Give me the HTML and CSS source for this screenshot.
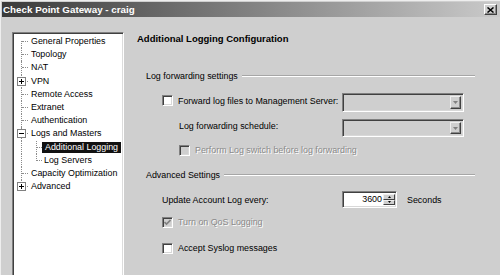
FILE: index.html
```html
<!DOCTYPE html>
<html lang="en">
<head>
  <meta charset="UTF-8">
  <title>Check Point Gateway - craig</title>
  <link rel="stylesheet" href="styles.css">
</head>
<body>
  <div class="window">
    <!-- Title bar -->
    <div class="titlebar">
      <span class="title">Check Point Gateway - craig</span>
      <span class="close">
        <svg width="7" height="6" viewBox="0 0 7 6"><path d="M0.5 0.5L6.5 5.5M6.5 0.5L0.5 5.5" stroke="#000" stroke-width="1.5"/></svg>
      </span>
    </div>

    <div class="content">
      <!-- Tree -->
      <ul class="tree">
        <li class="node first"><span class="branch"></span><span class="label">General Properties</span></li>
        <li class="node"><span class="branch"></span><span class="label">Topology</span></li>
        <li class="node"><span class="branch"></span><span class="label">NAT</span></li>
        <li class="node">
          <span class="branch">
            <svg class="expander" width="9" height="9" viewBox="0 0 9 9"><rect x="0.5" y="0.5" width="8" height="8" fill="#fff" stroke="#808080"/><path d="M2 4.5h5M4.5 2v5" stroke="#000"/></svg>
          </span>
          <span class="label">VPN</span>
        </li>
        <li class="node"><span class="branch"></span><span class="label">Remote Access</span></li>
        <li class="node"><span class="branch"></span><span class="label">Extranet</span></li>
        <li class="node"><span class="branch"></span><span class="label">Authentication</span></li>
        <li class="node">
          <span class="branch">
            <svg class="expander" width="9" height="9" viewBox="0 0 9 9"><rect x="0.5" y="0.5" width="8" height="8" fill="#fff" stroke="#808080"/><path d="M2 4.5h5" stroke="#000"/></svg>
          </span>
          <span class="label">Logs and Masters</span>
        </li>
        <li class="node child"><span class="branch pass"></span><span class="branch sub"></span><span class="label selected">Additional Logging</span></li>
        <li class="node child last-child"><span class="branch pass"></span><span class="branch sub"></span><span class="label">Log Servers</span></li>
        <li class="node"><span class="branch"></span><span class="label">Capacity Optimization</span></li>
        <li class="node last">
          <span class="branch">
            <svg class="expander" width="9" height="9" viewBox="0 0 9 9"><rect x="0.5" y="0.5" width="8" height="8" fill="#fff" stroke="#808080"/><path d="M2 4.5h5M4.5 2v5" stroke="#000"/></svg>
          </span>
          <span class="label">Advanced</span>
        </li>
      </ul>

      <!-- Settings page -->
      <div class="panel">
        <div class="heading">Additional Logging Configuration</div>

        <div class="group-title first-group">Log forwarding settings</div>

        <div class="row row-forward">
          <label class="check-label raise"><span class="check"></span>Forward log files to Management Server:</label>
          <div class="control">
            <div class="combo"><span class="combo-button"><svg width="5" height="3" viewBox="0 0 5 3"><path d="M0 0h5L2.5 3z" fill="#808080"/></svg></span></div>
          </div>
        </div>

        <div class="row row-schedule">
          <span class="indent raise">Log forwarding schedule:</span>
          <div class="control">
            <div class="combo"><span class="combo-button"><svg width="5" height="3" viewBox="0 0 5 3"><path d="M0 0h5L2.5 3z" fill="#808080"/></svg></span></div>
          </div>
        </div>

        <div class="row row-switch">
          <label class="check-label indent disabled wide"><span class="check off"></span>Perform Log switch before log forwarding</label>
        </div>

        <div class="group-title">Advanced Settings</div>

        <div class="row row-update">
          <span>Update Account Log every:</span>
          <div class="control">
            <div class="spin">
              <span class="spin-value">3600</span>
              <span class="spin-buttons">
                <span class="spin-button"><svg width="3" height="2" viewBox="0 0 3 2"><path d="M0 2h3L1.5 0z" fill="#000"/></svg></span>
                <span class="spin-button"><svg width="3" height="2" viewBox="0 0 3 2"><path d="M0 0h3L1.5 2z" fill="#000"/></svg></span>
              </span>
            </div>
            <span class="unit">Seconds</span>
          </div>
        </div>

        <div class="row row-qos">
          <label class="check-label disabled wide">
            <span class="check off"><svg width="7" height="7" viewBox="0 0 7 7"><path d="M0.5 3l2 2 4-4" fill="none" stroke="#808080" stroke-width="1.6"/></svg></span>Turn on QoS Logging
          </label>
        </div>

        <div class="row row-syslog">
          <label class="check-label wide"><span class="check"></span>Accept Syslog messages</label>
        </div>
      </div>
    </div>
  </div>
</body>
</html>
```

FILE: styles.css
```css
/* base */
* {
  margin: 0;
  padding: 0;
  box-sizing: border-box;
}

body {
  font-family: 'Liberation Sans', Arial, sans-serif;
  font-size: 8.9px;
  color: #000;
  background: #cfcfcf;
  overflow: hidden;
}

.window {
  width: 500px;
  height: 275px;
  overflow: hidden;
  background: #cfcfcf;
  border-top: 1px solid #eeeeee;
  border-left: 1px solid #eeeeee;
  padding: 1px 0 0 1px;
}

/* title bar */
.titlebar {
  display: flex;
  align-items: center;
  height: 15px;
  padding-left: 1px;
  background: linear-gradient(to right, #3a3a3a, #cacaca);
}

.title {
  color: #fff;
  font-weight: bold;
  font-size: 9.8px;
  white-space: nowrap;
}

.close {
  display: flex;
  align-items: center;
  justify-content: center;
  width: 13px;
  height: 11px;
  margin-left: auto;
  margin-right: 3px;
  background: #cfcfcf;
  border: 1px solid;
  border-color: #fff #404040 #404040 #fff;
  box-shadow: inset -1px -1px #8a8a8a;
}

/* body */
.content {
  display: flex;
  padding: 15px 0 0 10px;
}

/* tree */
.tree {
  list-style: none;
  flex: none;
  width: 112px;
  height: 250px;
  padding-top: 2px;
  background: #fff;
  border: 1px solid;
  border-color: #808080 #fff #fff #808080;
  box-shadow: inset 1px 1px #404040, inset -1px -1px #dcdcdc;
}

.node {
  display: flex;
  height: 13.2px;
  line-height: 13px;
  white-space: nowrap;
}

.branch {
  position: relative;
  flex: none;
  width: 16px;
  display: flex;
  align-items: center;
}

.branch::before {
  content: "";
  position: absolute;
  left: 8px;
  top: 0;
  bottom: 0;
  border-left: 1px dotted #8c8c8c;
}

.branch::after {
  content: "";
  position: absolute;
  left: 9px;
  top: 6px;
  width: 6px;
  border-top: 1px dotted #8c8c8c;
}

.node.first .branch::before { top: 6px; }
.node.last .branch::before { bottom: 6px; }

.branch.pass::after { display: none; }

.branch.sub { width: 13px; }
.branch.sub::before { left: 7px; }
.branch.sub::after { left: 8px; width: 5px; }
.node.last-child .branch.sub::before { bottom: 6px; }

.expander {
  position: relative;
  z-index: 1;
  margin-left: 4px;
}

.label {
  padding: 0 2px;
}

.label.selected {
  align-self: center;
  line-height: 11px;
  padding: 0 3px;
  background: #111;
  color: #fff;
}

/* settings page */
.panel {
  flex: 1;
  margin-left: 13px;
  padding-right: 25px;
  display: flex;
  flex-direction: column;
}

.heading {
  font-weight: bold;
  font-size: 9.5px;
  line-height: 12px;
  margin-top: 1px;
}

.group-title {
  display: flex;
  align-items: center;
  height: 12px;
  padding-left: 9px;
  margin-top: 13px;
  white-space: nowrap;
}

.group-title.first-group { margin-top: 25px; }

.group-title::after {
  content: "";
  flex: 1;
  margin-left: 4px;
  border-top: 1px solid #a6a6a6;
  border-bottom: 1px solid #fff;
}

.row {
  display: grid;
  grid-template-columns: 180px auto;
  align-items: center;
  padding-left: 25px;
  white-space: nowrap;
}

.row-forward { margin-top: 11px; height: 19px; }
.row-schedule { margin-top: 7px; height: 18px; }
.row-switch { margin-top: 7px; height: 12px; }
.row-update { margin-top: 10px; height: 17px; }
.row-qos { margin-top: 8px; height: 12px; }
.row-syslog { margin-top: 14px; height: 12px; }

.raise { margin-bottom: 4px; }

.check-label {
  display: flex;
  align-items: center;
  gap: 5px;
}

.check-label.wide { grid-column: 1 / span 2; }

.indent { padding-left: 17px; }

.check {
  display: flex;
  align-items: center;
  justify-content: center;
  flex: none;
  width: 11px;
  height: 11px;
  background: #fff;
  border: 1px solid;
  border-color: #808080 #fff #fff #808080;
  box-shadow: inset 1px 1px #404040, inset -1px -1px #d8d8d8;
}

.check.off { background: #cfcfcf; }

.disabled {
  color: #8a8a8a;
  text-shadow: 1px 1px 0 #fff;
}

.control {
  display: flex;
  align-items: center;
  height: 100%;
}

/* combo box */
.combo {
  display: flex;
  justify-content: flex-end;
  width: 122px;
  height: 100%;
  padding: 2px;
  background: #cfcfcf;
  border: 1px solid;
  border-color: #808080 #fff #fff #808080;
  box-shadow: inset 1px 1px #404040, inset -1px -1px #d8d8d8;
}

.combo-button {
  display: flex;
  align-items: center;
  justify-content: center;
  width: 11px;
  background: #cfcfcf;
  border: 1px solid;
  border-color: #eee #404040 #404040 #eee;
  box-shadow: inset -1px -1px #8a8a8a;
}

/* spin box */
.spin {
  display: flex;
  width: 55px;
  height: 100%;
  padding: 2px 1px 2px 2px;
  background: #fff;
  border: 1px solid;
  border-color: #808080 #fff #fff #808080;
  box-shadow: inset 1px 1px #404040, inset -1px -1px #d8d8d8;
}

.spin-value {
  flex: 1;
  text-align: right;
  line-height: 11px;
  padding-right: 1px;
}

.spin-buttons {
  display: flex;
  flex-direction: column;
  width: 12px;
}

.spin-button {
  flex: 1;
  display: flex;
  align-items: center;
  justify-content: center;
  background: #cfcfcf;
  border: 1px solid;
  border-color: #eee #404040 #404040 #eee;
}

.unit { margin-left: 10px; }
```
